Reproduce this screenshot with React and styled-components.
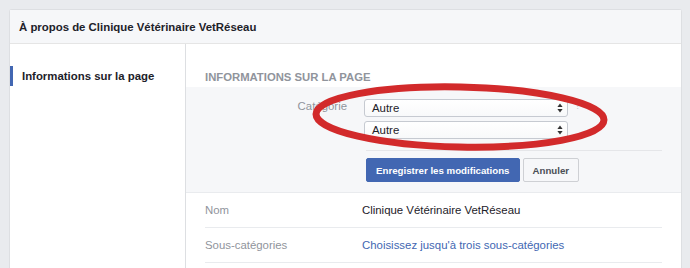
import React from "react";
import styled, { createGlobalStyle } from "styled-components";

const GlobalStyle = createGlobalStyle`
  html, body { margin: 0; padding: 0; background: #e9ebee; }
  body { font-family: "Liberation Sans", Arial, sans-serif; -webkit-font-smoothing: antialiased; }
`;

const Page = styled.div`
  position: relative;
  width: 690px;
  height: 268px;
  overflow: hidden;
  padding: 9px 8px 0 9px;
  box-sizing: border-box;
`;

const Card = styled.div`
  background: #fff;
  border: 1px solid #dddfe2;
  border-bottom: none;
  border-radius: 3px 3px 0 0;
  height: 300px;
`;

const Header = styled.div`
  height: 33px;
  display: flex;
  align-items: center;
  padding: 0 9px;
  background: #f6f7f9;
  border-bottom: 1px solid #e5e5e5;
  font-size: 11.4px;
  font-weight: bold;
  color: #1d2129;
`;

const Body = styled.div`
  display: grid;
  grid-template-columns: 176px 1fr;
  height: 100%;
`;

const Sidebar = styled.div`
  border-right: 1px solid #dddfe2;
  padding-top: 22px;
`;

const NavItem = styled.div`
  height: 20px;
  line-height: 20px;
  padding-left: 9px;
  border-left: 3px solid ${(p) => (p.$active ? "#4267b2" : "transparent")};
  font-size: 11.4px;
  font-weight: bold;
  color: #1d2129;
`;

const Main = styled.div``;

const SectionTitle = styled.div`
  padding: 26px 19px 3px;
  line-height: 14px;
  font-size: 11.3px;
  font-weight: bold;
  color: #90949c;
  text-transform: uppercase;
`;

const EditArea = styled.div`
  background: #f6f7f9;
  padding: 12px 19px 10px;
  border-bottom: 1px solid #e9ebee;
`;

const FieldRow = styled.div`
  display: grid;
  grid-template-columns: 142px 204px auto;
  column-gap: 17px;
  align-items: start;
`;

const FieldLabel = styled.div`
  text-align: right;
  font-size: 11.4px;
  color: #90949c;
  line-height: 14px;
`;

const SelectStack = styled.div`
  display: flex;
  flex-direction: column;
  gap: 4px;
`;

const SelectBox = styled.div`
  height: 18px;
  box-sizing: border-box;
  border: 1px solid #c6cad1;
  border-radius: 3px;
  background: linear-gradient(#ffffff, #f8f9fa);
  display: flex;
  align-items: center;
  justify-content: space-between;
  padding: 0 4px 0 7px;
  font-size: 11.4px;
  color: #1d2129;
`;

const HelpMark = styled.div`
  margin-left: -10px;
  padding-top: 1px;
  font-size: 10px;
  color: #c9ccd1;
  line-height: 12px;
`;

const Divider = styled.div`
  margin: 11px 0 0 161px;
  height: 1px;
  background: #e5e6e9;
`;

const ButtonRow = styled.div`
  display: flex;
  gap: 3px;
  margin: 7px 0 0 161px;
`;

const Button = styled.button`
  height: 24px;
  box-sizing: border-box;
  padding: 0 9px;
  border-radius: 2px;
  font-family: inherit;
  font-size: 9.7px;
  font-weight: bold;
  border: 1px solid ${(p) => (p.$primary ? "#4267b2" : "#ced0d4")};
  background: ${(p) => (p.$primary ? "#4267b2" : "#f6f7f9")};
  color: ${(p) => (p.$primary ? "#fff" : "#4b4f56")};
`;

const Rows = styled.div`
  padding: 0 19px;
`;

const InfoRow = styled.div`
  display: grid;
  grid-template-columns: 157px 1fr;
  height: 34px;
  align-items: center;
  border-bottom: 1px solid #e9ebee;
  font-size: 11.4px;
`;

const RowLabel = styled.div`
  color: #90949c;
`;

const RowValue = styled.div`
  color: ${(p) => (p.$link ? "#4267b2" : "#1d2129")};
`;

const Overlay = styled.svg`
  position: absolute;
  left: 0;
  top: 0;
  pointer-events: none;
`;

const Arrows = () => (
  <svg width="6" height="10" viewBox="0 0 6 10">
    <path d="M3 0.5 L5.6 4 H0.4 Z" fill="#333" />
    <path d="M3 9.5 L5.6 6 H0.4 Z" fill="#333" />
  </svg>
);

export default function App() {
  return (
    <>
      <GlobalStyle />
      <Page>
        <Card>
          <Header>À propos de Clinique Vétérinaire VetRéseau</Header>
          <Body>
            <Sidebar>
              <NavItem $active>Informations sur la page</NavItem>
            </Sidebar>
            <Main>
              <SectionTitle>Informations sur la page</SectionTitle>
              <EditArea>
                <FieldRow>
                  <FieldLabel>Catégorie</FieldLabel>
                  <SelectStack>
                    <SelectBox>
                      <span>Autre</span>
                      <Arrows />
                    </SelectBox>
                    <SelectBox>
                      <span>Autre</span>
                      <Arrows />
                    </SelectBox>
                  </SelectStack>
                  <HelpMark>?</HelpMark>
                </FieldRow>
                <Divider />
                <ButtonRow>
                  <Button $primary>Enregistrer les modifications</Button>
                  <Button>Annuler</Button>
                </ButtonRow>
              </EditArea>
              <Rows>
                <InfoRow>
                  <RowLabel>Nom</RowLabel>
                  <RowValue>Clinique Vétérinaire VetRéseau</RowValue>
                </InfoRow>
                <InfoRow>
                  <RowLabel>Sous-catégories</RowLabel>
                  <RowValue $link>Choisissez jusqu'à trois sous-catégories</RowValue>
                </InfoRow>
              </Rows>
            </Main>
          </Body>
        </Card>
        <Overlay width="690" height="268" viewBox="0 0 690 268">
          <ellipse
            cx="460"
            cy="117"
            rx="144"
            ry="30"
            fill="none"
            stroke="#d22a2b"
            strokeWidth="7"
            transform="rotate(1.2 460 117)"
          />
        </Overlay>
      </Page>
    </>
  );
}
